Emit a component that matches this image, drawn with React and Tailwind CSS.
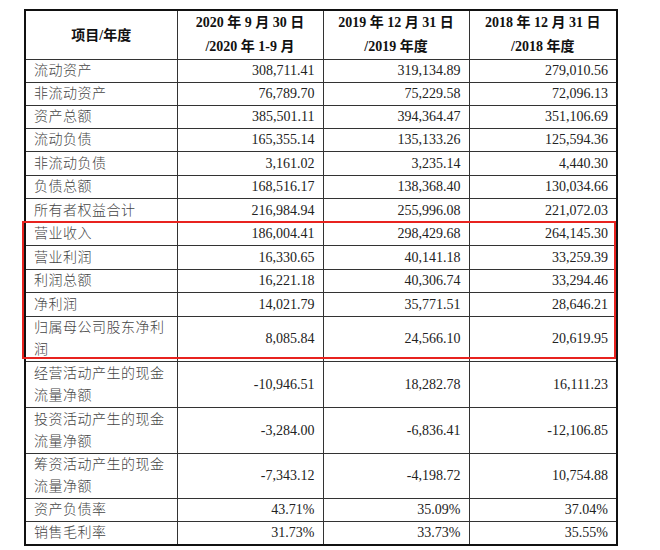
import React from "react";

const rows = [
  { label: ["流动资产"], v: ["308,711.41", "319,134.89", "279,010.56"], h: "h-[23px]" },
  { label: ["非流动资产"], v: ["76,789.70", "75,229.58", "72,096.13"], h: "h-[23px]" },
  { label: ["资产总额"], v: ["385,501.11", "394,364.47", "351,106.69"], h: "h-[23px]" },
  { label: ["流动负债"], v: ["165,355.14", "135,133.26", "125,594.36"], h: "h-[23px]" },
  { label: ["非流动负债"], v: ["3,161.02", "3,235.14", "4,440.30"], h: "h-[24px]" },
  { label: ["负债总额"], v: ["168,516.17", "138,368.40", "130,034.66"], h: "h-[23px]" },
  { label: ["所有者权益合计"], v: ["216,984.94", "255,996.08", "221,072.03"], h: "h-[24px]" },
  { label: ["营业收入"], v: ["186,004.41", "298,429.68", "264,145.30"], h: "h-[22px]" },
  { label: ["营业利润"], v: ["16,330.65", "40,141.18", "33,259.39"], h: "h-[24px]" },
  { label: ["利润总额"], v: ["16,221.18", "40,306.74", "33,294.46"], h: "h-[23px]" },
  { label: ["净利润"], v: ["14,021.79", "35,771.51", "28,646.21"], h: "h-[24px]" },
  { label: ["归属母公司股东净利", "润"], v: ["8,085.84", "24,566.10", "20,619.95"], h: "h-[45px]" },
  { label: ["经营活动产生的现金", "流量净额"], v: ["-10,946.51", "18,282.78", "16,111.23"], h: "h-[46px]" },
  { label: ["投资活动产生的现金", "流量净额"], v: ["-3,284.00", "-6,836.41", "-12,106.85"], h: "h-[46px]" },
  { label: ["筹资活动产生的现金", "流量净额"], v: ["-7,343.12", "-4,198.72", "10,754.88"], h: "h-[45px]" },
  { label: ["资产负债率"], v: ["43.71%", "35.09%", "37.04%"], h: "h-[23px]" },
  { label: ["销售毛利率"], v: ["31.73%", "33.73%", "35.55%"], h: "h-[23px]" },
];

const font = { fontFamily: '"Liberation Serif", "Noto Sans CJK SC", serif' };

export default function App() {
  return (
    <div
      className="w-[660px] h-[550px] bg-white pl-[24px] pt-[9px]"
      style={font}
    >
      <div className="relative w-[592px]">
        <table className="w-[592px] border-collapse border-2 border-[#111] table-fixed">
          <colgroup>
            <col className="w-[152px]" />
            <col className="w-[146px]" />
            <col className="w-[146px]" />
            <col className="w-[148px]" />
          </colgroup>
          <thead>
            <tr className="h-[47px]">
              <th className="border border-[#333] text-[14px] font-bold text-[#111] text-center align-middle p-0">
                项目/年度
              </th>
              <th className="border border-[#333] text-[14px] font-bold text-[#111] text-center align-middle leading-[24px] p-0">
                2020 年 9 月 30 日
                <br />
                /2020 年 1-9 月
              </th>
              <th className="border border-[#333] text-[14px] font-bold text-[#111] text-center align-middle leading-[24px] p-0">
                2019 年 12 月 31 日
                <br />
                /2019 年度
              </th>
              <th className="border border-[#333] text-[14px] font-bold text-[#111] text-center align-middle leading-[24px] p-0">
                2018 年 12 月 31 日
                <br />
                /2018 年度
              </th>
            </tr>
          </thead>
          <tbody>
            {rows.map((r, i) => (
              <tr key={i} className={r.h}>
                <td className="border border-[#333] pl-[8px] pr-0 py-0 text-[14px] leading-[22px] text-[#444] font-light tracking-[0.5px] align-middle whitespace-nowrap">
                  {r.label.map((l, j) => (
                    <div key={j}>{l}</div>
                  ))}
                </td>
                {r.v.map((v, j) => (
                  <td
                    key={j}
                    className="border border-[#333] pr-[8px] pl-0 py-0 text-[14px] leading-[20px] text-[#222] text-right align-middle"
                  >
                    {v}
                  </td>
                ))}
              </tr>
            ))}
          </tbody>
        </table>
        <div className="absolute left-[-2px] top-[212px] w-[594px] h-[138px] border-2 border-[#e8231f] pointer-events-none" />
      </div>
    </div>
  );
}
